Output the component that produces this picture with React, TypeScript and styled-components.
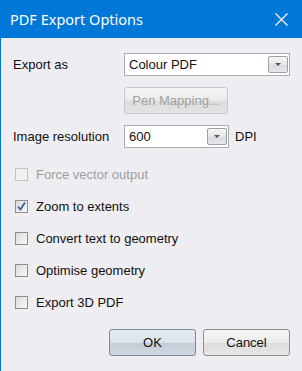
import React, { FC } from "react"
import styled, { createGlobalStyle } from "styled-components"

const GlobalStyle = createGlobalStyle`
  html, body {
    margin: 0;
    padding: 0;
    background: #eeedf2;
  }
  body {
    font-family: "Liberation Sans", Arial, sans-serif;
    font-size: 13px;
    color: #111;
  }
`

const CloseIcon: FC = () => (
  <svg width="13" height="13" viewBox="0 0 13 13">
    <path d="M0.5 0.5 L12.5 12.5 M12.5 0.5 L0.5 12.5" stroke="#fff" strokeWidth="1.1" fill="none" />
  </svg>
)

const CheckMark: FC = () => (
  <svg width="11" height="11" viewBox="0 0 11 11">
    <path d="M2 5.5 L4.5 8.5 L9 1.5" stroke="#3a5fa8" strokeWidth="1.8" fill="none" />
  </svg>
)

interface CheckProps {
  label: string
  checked?: boolean
  disabled?: boolean
}

const Check: FC<CheckProps> = ({ label, checked, disabled }) => (
  <CheckRow $disabled={disabled}>
    <Box $disabled={disabled}>{checked && <CheckMark />}</Box>
    <span>{label}</span>
  </CheckRow>
)

const App: FC = () => (
  <Window>
    <GlobalStyle />
    <TitleBar>
      <Title>PDF Export Options</Title>
      <CloseButton><CloseIcon /></CloseButton>
    </TitleBar>
    <Body>
      <FieldRow>
        <Label>Export as</Label>
        <Combo $width={166}>
          <span>Colour PDF</span>
          <DropButton><Arrow /></DropButton>
        </Combo>
      </FieldRow>
      <SubRow>
        <PenButton disabled>Pen Mapping...</PenButton>
      </SubRow>
      <FieldRow>
        <Label>Image resolution</Label>
        <Combo $width={105}>
          <span>600</span>
          <DropButton><Arrow /></DropButton>
        </Combo>
        <Unit>DPI</Unit>
      </FieldRow>
      <Checks>
        <Check label="Force vector output" disabled />
        <Check label="Zoom to extents" checked />
        <Check label="Convert text to geometry" />
        <Check label="Optimise geometry" />
        <Check label="Export 3D PDF" />
      </Checks>
      <Footer>
        <DialogButton $primary>OK</DialogButton>
        <DialogButton>Cancel</DialogButton>
      </Footer>
    </Body>
  </Window>
)

const Window = styled.div`
  width: 302px;
  height: 371px;
  display: flex;
  flex-direction: column;
  border-left: 1px solid #0078d7;
  box-sizing: border-box;
  overflow: hidden;
`

const TitleBar = styled.div`
  height: 38px;
  flex: none;
  background: #0078d7;
  display: flex;
  align-items: center;
  justify-content: space-between;
  padding: 0 14px 0 9px;
`

const Title = styled.div`
  font-family: "Noto Sans", "Open Sans", sans-serif;
  font-size: 14.5px;
  color: #fff;
  margin-top: -1px;
`

const CloseButton = styled.div`
  display: flex;
  align-items: center;
`

const Body = styled.div`
  flex: 1;
  background: #eeedf2;
  padding: 15px 12px 0 12px;
  display: flex;
  flex-direction: column;
`

const FieldRow = styled.div`
  display: flex;
  align-items: center;
  height: 23px;
`

const SubRow = styled.div`
  display: flex;
  padding-left: 111px;
  margin-top: 11px;
  margin-bottom: 11px;
`

const Label = styled.div`
  width: 111px;
`

const Combo = styled.div<{ $width: number }>`
  width: ${p => p.$width}px;
  height: 23px;
  box-sizing: border-box;
  border: 1px solid #abadb3;
  background: #fff;
  display: flex;
  align-items: center;
  justify-content: space-between;
  padding: 0 1px 0 4px;
`

const DropButton = styled.div`
  width: 20px;
  height: 17px;
  box-sizing: border-box;
  border: 1px solid #9aa0a8;
  border-radius: 2px;
  background: linear-gradient(#f6f6f6 0%, #e8e8ea 50%, #d8d9dd 51%, #e6e7ea 100%);
  display: flex;
  align-items: center;
  justify-content: center;
`

const Arrow = styled.div`
  width: 0;
  height: 0;
  border-left: 3px solid transparent;
  border-right: 3px solid transparent;
  border-top: 3px solid #555;
`

const Unit = styled.div`
  margin-left: 6px;
`

const PenButton = styled.button`
  width: 104px;
  height: 27px;
  font-family: inherit;
  font-size: 13px;
  color: #a0a0a0;
  border: 1px solid #c8c9cc;
  border-radius: 3px;
  background: linear-gradient(#f4f4f4 0%, #ebebeb 50%, #dcdcdc 51%, #e3e3e3 100%);
  padding: 0;
`

const Checks = styled.div`
  display: flex;
  flex-direction: column;
  gap: 18px;
  margin-top: 19px;
`

const CheckRow = styled.label<{ $disabled?: boolean }>`
  display: flex;
  align-items: center;
  gap: 8px;
  height: 14px;
  padding-left: 2px;
  color: ${p => (p.$disabled ? "#9d9d9d" : "#111")};
`

const Box = styled.div<{ $disabled?: boolean }>`
  width: 13px;
  height: 13px;
  box-sizing: border-box;
  border: 1px solid ${p => (p.$disabled ? "#c5c5c5" : "#8f8f8f")};
  background: ${p =>
    p.$disabled ? "#f1f1f1" : "linear-gradient(135deg, #dcdcdc, #f8f8f8)"};
  display: flex;
  align-items: center;
  justify-content: center;
`

const Footer = styled.div`
  display: flex;
  justify-content: flex-end;
  gap: 7px;
  margin-top: auto;
  margin-bottom: 15px;
`

const DialogButton = styled.button<{ $primary?: boolean }>`
  width: 87px;
  height: 27px;
  font-family: inherit;
  font-size: 13px;
  color: #111;
  border: 1px solid ${p => (p.$primary ? "#7f8894" : "#8e8f8f")};
  border-radius: 3px;
  padding: 0;
  background: ${p =>
    p.$primary
      ? "linear-gradient(#e7edf3 0%, #d9e1ea 50%, #c3ccd6 51%, #d0d8e0 100%)"
      : "linear-gradient(#f5f5f5 0%, #ececec 50%, #dcdcdc 51%, #e6e6e6 100%)"};
`

export default App
